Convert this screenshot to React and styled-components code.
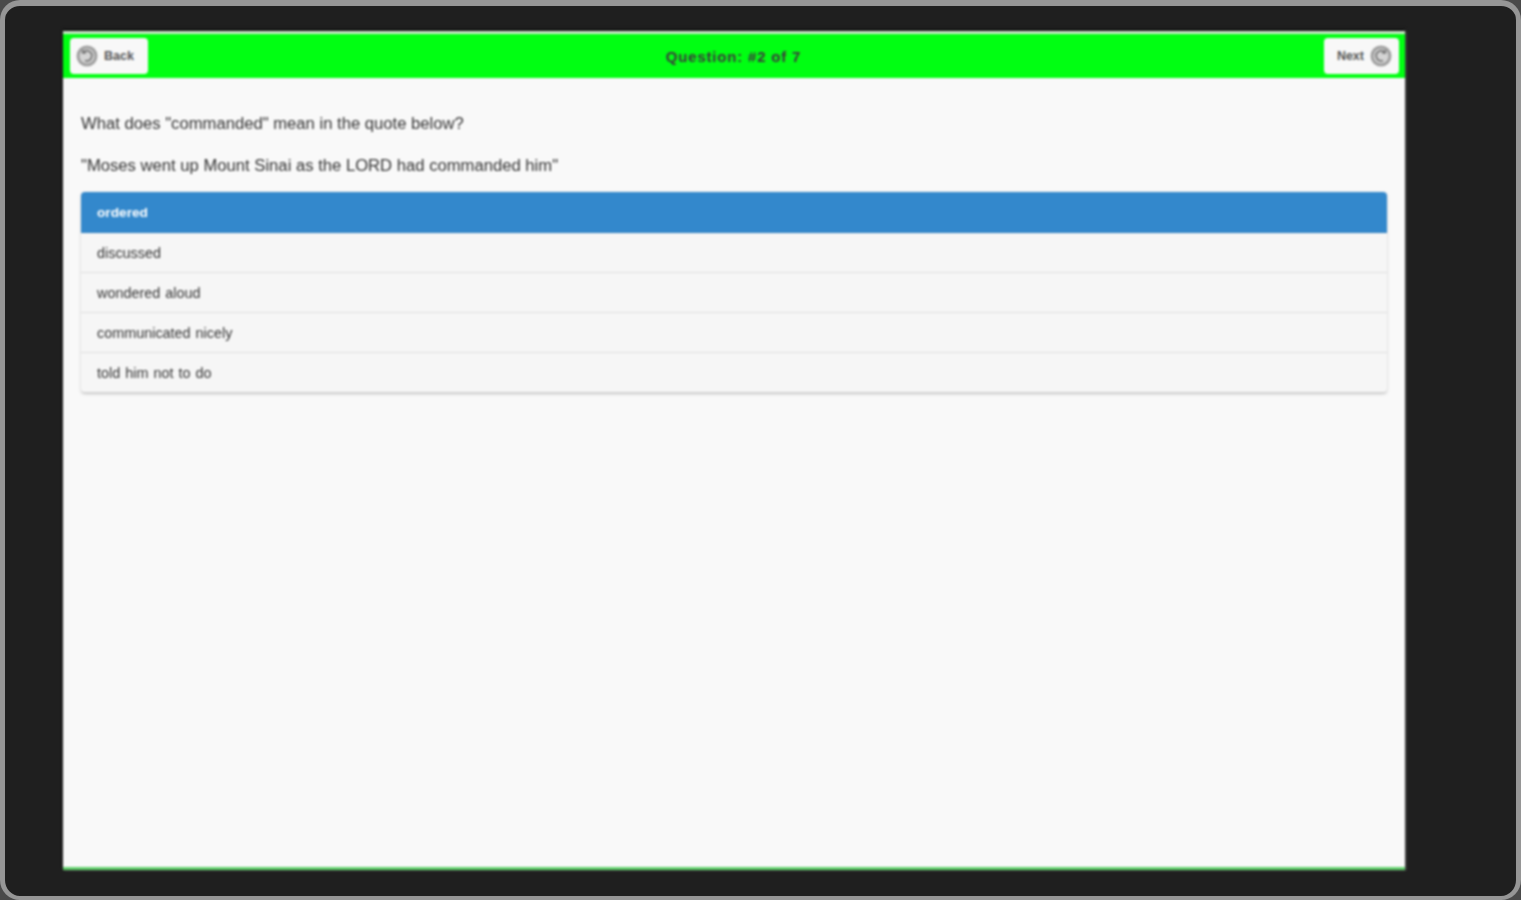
import React from 'react';
import styled, { createGlobalStyle } from 'styled-components';

const GlobalStyle = createGlobalStyle`
  html, body { margin: 0; padding: 0; height: 100%; background: #4a4a4a; }
  body { font-family: "Liberation Sans", Arial, sans-serif; overflow: hidden; }
`;

const Frame = styled.div`
  box-sizing: border-box;
  width: 1521px;
  height: 900px;
  padding: 25px 111px 26px 58px;
  background: #1f1f1f;
  border: solid #969696;
  border-width: 6px 5px 4px 5px;
  border-radius: 20px;
`;

const Card = styled.div`
  box-sizing: border-box;
  height: 100%;
  display: flex;
  flex-direction: column;
  background: #f9f9f9;
  border-bottom: 3px solid #5fd06a;
  box-shadow: 0 -2px 2px #111, 1px 0 2px rgba(255, 255, 255, 0.35);
  filter: blur(0.8px);
`;

const Header = styled.div`
  box-sizing: border-box;
  height: 47px;
  flex: none;
  display: flex;
  align-items: center;
  justify-content: space-between;
  padding: 0 6px 0 7px;
  background: #00ff12;
  border-top: 3px solid #c9e8c9;
`;

const NavButton = styled.button`
  box-sizing: border-box;
  width: ${(p) => p.$width}px;
  height: 36px;
  display: flex;
  align-items: center;
  justify-content: ${(p) => (p.$right ? 'flex-end' : 'flex-start')};
  gap: 6px;
  padding: 0 7px 0 6px;
  background: #f8f8f8;
  border: none;
  border-radius: 4px;
  font: bold 12.5px "Liberation Sans", Arial, sans-serif;
  color: #555;
`;

const RoundIcon = styled.svg`
  width: 22px;
  height: 22px;
  flex: none;
`;

const Title = styled.div`
  font-size: 15px;
  font-weight: bold;
  letter-spacing: 0.8px;
  color: #3c3c3c;
  padding-right: 5px;
`;

const Content = styled.div`
  padding: 36px 18px 0;
`;

const Prompt = styled.p`
  margin: 0 0 ${(p) => p.$gap}px;
  font-size: 16.65px;
  line-height: 20px;
  color: #333;
`;

const Options = styled.ul`
  list-style: none;
  margin: 0;
  padding: 0;
  border-radius: 4px;
  box-shadow: 0 1px 3px rgba(0, 0, 0, 0.2);
`;

const Option = styled.li`
  box-sizing: border-box;
  height: ${(p) => (p.$active ? 41 : 40)}px;
  display: flex;
  align-items: center;
  padding: 0 16px;
  font-size: ${(p) => (p.$active ? 13.7 : 14.4)}px;
  word-spacing: 1px;
  font-weight: ${(p) => (p.$active ? 'bold' : 'normal')};
  color: ${(p) => (p.$active ? '#fff' : '#333')};
  background: ${(p) => (p.$active ? '#3388cc' : '#f6f6f6')};
  border-bottom: 1px solid ${(p) => (p.$active ? '#2f7fc0' : '#dedede')};
  border-radius: ${(p) => (p.$active ? '4px 4px 0 0' : '0')};
  &:last-child {
    border-bottom: 1px solid #d0d0d0;
    border-radius: 0 0 4px 4px;
  }
`;

const options = ['ordered', 'discussed', 'wondered aloud', 'communicated nicely', 'told him not to do'];

// grey disc with a little curled arrow, mirrored for Next
const ArrowDisc = ({ flip }) => (
  <RoundIcon viewBox="0 0 22 22">
    <circle cx="11" cy="11" r="10.5" fill="#a0a0a0" />
    <circle cx="11" cy="11" r="7.5" fill="#d4d4d4" />
    <g transform={flip ? 'matrix(-1 0 0 1 22 0)' : undefined} fill="none" stroke="#7a7a7a" strokeWidth="1.8">
      <path d="M7 7.5 A5 5 0 1 1 9 15.5" />
      <path d="M6.5 5 L7 8 L10 7.5" />
    </g>
  </RoundIcon>
);

export default function App() {
  return (
    <>
      <GlobalStyle />
      <Frame>
        <Card>
          <Header>
            <NavButton $width={78}>
              <ArrowDisc />
              Back
            </NavButton>
            <Title>Question: #2 of 7</Title>
            <NavButton $width={75} $right>
              Next
              <ArrowDisc flip />
            </NavButton>
          </Header>
          <Content>
            <Prompt $gap={22}>What does "commanded" mean in the quote below?</Prompt>
            <Prompt $gap={16}>"Moses went up Mount Sinai as the LORD had commanded him"</Prompt>
            <Options>
              {options.map((text, i) => (
                <Option key={text} $active={i === 0}>{text}</Option>
              ))}
            </Options>
          </Content>
        </Card>
      </Frame>
    </>
  );
}
